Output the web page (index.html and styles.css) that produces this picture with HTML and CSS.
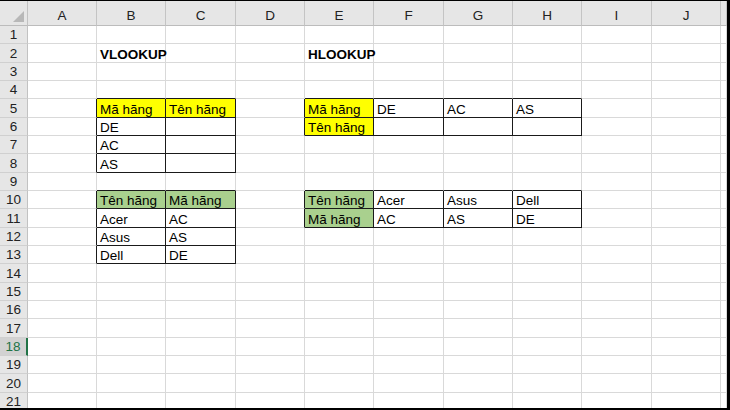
FILE: index.html
```html
<!DOCTYPE html>
<html>
<head>
<meta charset="utf-8">
<link rel="stylesheet" href="styles.css">
</head>
<body>
<div class="sheet">
  <div class="row head">
    <div class="corner"><span class="tri"></span></div>
    <div class="ch">A</div><div class="ch">B</div><div class="ch">C</div><div class="ch">D</div><div class="ch">E</div>
    <div class="ch">F</div><div class="ch">G</div><div class="ch">H</div><div class="ch">I</div><div class="ch">J</div><div class="ch"></div>
  </div>
  <div class="row">
    <div class="rh">1</div>
    <div class="c"></div><div class="c"></div><div class="c"></div><div class="c"></div><div class="c"></div><div class="c"></div><div class="c"></div><div class="c"></div><div class="c"></div><div class="c"></div><div class="c"></div>
  </div>
  <div class="row">
    <div class="rh">2</div>
    <div class="c"></div><div class="c bold">VLOOKUP</div><div class="c"></div><div class="c"></div><div class="c bold">HLOOKUP</div><div class="c"></div><div class="c"></div><div class="c"></div><div class="c"></div><div class="c"></div><div class="c"></div>
  </div>
  <div class="row">
    <div class="rh">3</div>
    <div class="c"></div><div class="c"></div><div class="c"></div><div class="c"></div><div class="c"></div><div class="c"></div><div class="c"></div><div class="c"></div><div class="c"></div><div class="c"></div><div class="c"></div>
  </div>
  <div class="row">
    <div class="rh">4</div>
    <div class="c"></div><div class="c b"></div><div class="c b"></div><div class="c"></div><div class="c b"></div><div class="c b"></div><div class="c b"></div><div class="c b"></div><div class="c"></div><div class="c"></div><div class="c"></div>
  </div>
  <div class="row">
    <div class="rh">5</div>
    <div class="c r"></div><div class="c r b y">Mã hãng</div><div class="c r b y">Tên hãng</div><div class="c r"></div><div class="c r b y">Mã hãng</div><div class="c r b">DE</div><div class="c r b">AC</div><div class="c r b">AS</div><div class="c"></div><div class="c"></div><div class="c"></div>
  </div>
  <div class="row">
    <div class="rh">6</div>
    <div class="c r"></div><div class="c r b">DE</div><div class="c r b"></div><div class="c r"></div><div class="c r b y">Tên hãng</div><div class="c r b"></div><div class="c r b"></div><div class="c r b"></div><div class="c"></div><div class="c"></div><div class="c"></div>
  </div>
  <div class="row">
    <div class="rh">7</div>
    <div class="c r"></div><div class="c r b">AC</div><div class="c r b"></div><div class="c"></div><div class="c"></div><div class="c"></div><div class="c"></div><div class="c"></div><div class="c"></div><div class="c"></div><div class="c"></div>
  </div>
  <div class="row">
    <div class="rh">8</div>
    <div class="c r"></div><div class="c r b">AS</div><div class="c r b"></div><div class="c"></div><div class="c"></div><div class="c"></div><div class="c"></div><div class="c"></div><div class="c"></div><div class="c"></div><div class="c"></div>
  </div>
  <div class="row">
    <div class="rh">9</div>
    <div class="c"></div><div class="c b"></div><div class="c b"></div><div class="c"></div><div class="c b"></div><div class="c b"></div><div class="c b"></div><div class="c b"></div><div class="c"></div><div class="c"></div><div class="c"></div>
  </div>
  <div class="row">
    <div class="rh">10</div>
    <div class="c r"></div><div class="c r b g">Tên hãng</div><div class="c r b g">Mã hãng</div><div class="c r"></div><div class="c r b g">Tên hãng</div><div class="c r b">Acer</div><div class="c r b">Asus</div><div class="c r b">Dell</div><div class="c"></div><div class="c"></div><div class="c"></div>
  </div>
  <div class="row">
    <div class="rh">11</div>
    <div class="c r"></div><div class="c r b">Acer</div><div class="c r b">AC</div><div class="c r"></div><div class="c r b g">Mã hãng</div><div class="c r b">AC</div><div class="c r b">AS</div><div class="c r b">DE</div><div class="c"></div><div class="c"></div><div class="c"></div>
  </div>
  <div class="row">
    <div class="rh">12</div>
    <div class="c r"></div><div class="c r b">Asus</div><div class="c r b">AS</div><div class="c"></div><div class="c"></div><div class="c"></div><div class="c"></div><div class="c"></div><div class="c"></div><div class="c"></div><div class="c"></div>
  </div>
  <div class="row">
    <div class="rh">13</div>
    <div class="c r"></div><div class="c r b">Dell</div><div class="c r b">DE</div><div class="c"></div><div class="c"></div><div class="c"></div><div class="c"></div><div class="c"></div><div class="c"></div><div class="c"></div><div class="c"></div>
  </div>
  <div class="row">
    <div class="rh">14</div>
    <div class="c"></div><div class="c"></div><div class="c"></div><div class="c"></div><div class="c"></div><div class="c"></div><div class="c"></div><div class="c"></div><div class="c"></div><div class="c"></div><div class="c"></div>
  </div>
  <div class="row">
    <div class="rh">15</div>
    <div class="c"></div><div class="c"></div><div class="c"></div><div class="c"></div><div class="c"></div><div class="c"></div><div class="c"></div><div class="c"></div><div class="c"></div><div class="c"></div><div class="c"></div>
  </div>
  <div class="row">
    <div class="rh">16</div>
    <div class="c"></div><div class="c"></div><div class="c"></div><div class="c"></div><div class="c"></div><div class="c"></div><div class="c"></div><div class="c"></div><div class="c"></div><div class="c"></div><div class="c"></div>
  </div>
  <div class="row">
    <div class="rh">17</div>
    <div class="c"></div><div class="c"></div><div class="c"></div><div class="c"></div><div class="c"></div><div class="c"></div><div class="c"></div><div class="c"></div><div class="c"></div><div class="c"></div><div class="c"></div>
  </div>
  <div class="row">
    <div class="rh sel">18</div>
    <div class="c"></div><div class="c"></div><div class="c"></div><div class="c"></div><div class="c"></div><div class="c"></div><div class="c"></div><div class="c"></div><div class="c"></div><div class="c"></div><div class="c"></div>
  </div>
  <div class="row">
    <div class="rh">19</div>
    <div class="c"></div><div class="c"></div><div class="c"></div><div class="c"></div><div class="c"></div><div class="c"></div><div class="c"></div><div class="c"></div><div class="c"></div><div class="c"></div><div class="c"></div>
  </div>
  <div class="row">
    <div class="rh">20</div>
    <div class="c"></div><div class="c"></div><div class="c"></div><div class="c"></div><div class="c"></div><div class="c"></div><div class="c"></div><div class="c"></div><div class="c"></div><div class="c"></div><div class="c"></div>
  </div>
  <div class="row">
    <div class="rh">21</div>
    <div class="c"></div><div class="c"></div><div class="c"></div><div class="c"></div><div class="c"></div><div class="c"></div><div class="c"></div><div class="c"></div><div class="c"></div><div class="c"></div><div class="c"></div>
  </div>
</div>
</body>
</html>
```
FILE: styles.css
```css
html, body {
  margin: 0;
  padding: 0;
  background: #fff;
}
* { box-sizing: border-box; }

.sheet {
  width: 730px;
  height: 410px;
  border-top: 1px solid #000;
  border-right: 3px solid #000;
  border-bottom: 2px solid #000;
  overflow: hidden;
  display: grid;
  grid-template-rows: 25px 18px 19px 18px 18px 19px 18px 18px 19px 18px 18px 19px 18px 18px 19px 18px 18px 19px 18px 18px 19px 18px;
  font-family: "Liberation Sans", Arial, sans-serif;
  color: #000;
}

.row {
  display: grid;
  grid-template-columns: 28px 69px 69px 70px 69px 69px 70px 69px 69px 70px 69px 1fr;
  min-height: 0;
}

.corner {
  background: #e6e6e6;
  border-right: 1px solid #c2c2c2;
  border-bottom: 1px solid #bcbcbc;
  position: relative;
}
.tri {
  position: absolute;
  right: 3px;
  bottom: 3px;
  width: 0;
  height: 0;
  border-left: 11px solid transparent;
  border-bottom: 11px solid #b8b8b8;
}

.ch {
  background: #e6e6e6;
  border-right: 1px solid #c4c4c4;
  border-bottom: 1px solid #bcbcbc;
  display: flex;
  align-items: center;
  justify-content: center;
  padding-top: 5px;
  font-size: 13.5px;
  color: #222;
}

.rh {
  background: #e6e6e6;
  border-right: 1px solid #c2c2c2;
  border-bottom: 1px solid #d0d0d0;
  display: flex;
  align-items: center;
  justify-content: center;
  font-size: 13.5px;
  color: #222;
  overflow: hidden;
}
.rh.sel {
  background: #d2d2d2;
  color: #217346;
  border-right: 2px solid #217346;
}

.c {
  border-right: 1px solid #d9d9d9;
  border-bottom: 1px solid #d9d9d9;
  display: flex;
  align-items: flex-end;
  padding-left: 3px;
  font-size: 13.5px;
  line-height: 15px;
  white-space: nowrap;
  overflow: hidden;
}
.c.r { border-right-color: #1a1a1a; }
.c.b { border-bottom-color: #1a1a1a; }
.c.y { background: #ffff00; }
.c.g { background: #a9d08e; }
.c.bold {
  font-weight: bold;
  overflow: visible;
}
```
